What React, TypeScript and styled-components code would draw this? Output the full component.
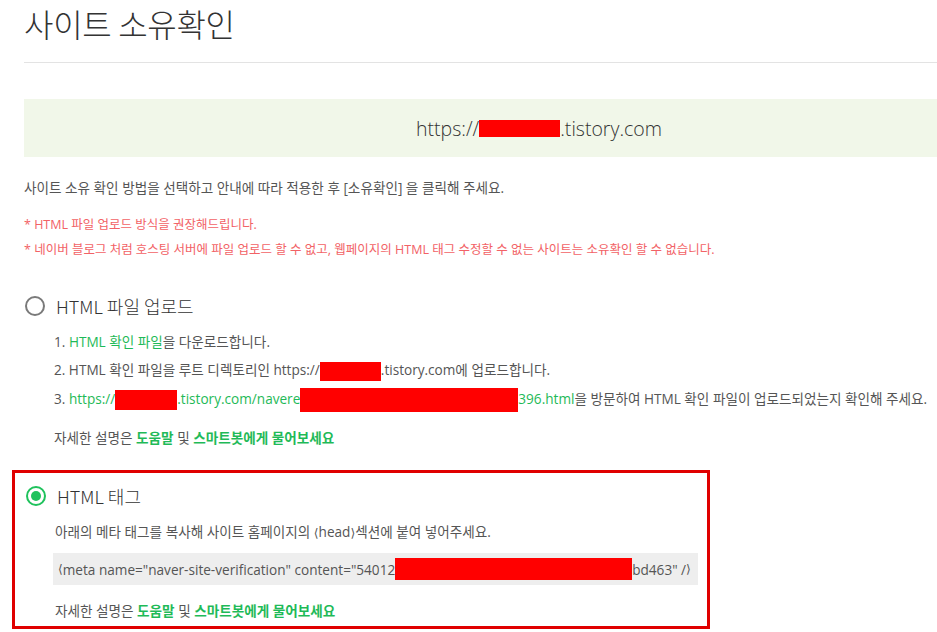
import React from 'react';
import styled, { createGlobalStyle } from 'styled-components';

const GlobalStyle = createGlobalStyle`
  html, body {
    margin: 0;
    padding: 0;
    background: #fff;
    overflow: hidden;
  }
  body {
    font-family: 'Open Sans', 'Noto Sans CJK KR', sans-serif;
    color: #555;
  }
`;

const Page = styled.div`
  width: 1030px;
  padding: 0 0 0 24px;
`;

const Title = styled.h1`
  margin: 0;
  height: 63px;
  font-family: 'Noto Sans CJK KR', sans-serif;
  font-size: 32px;
  font-weight: 300;
  line-height: 46px;
  color: #333;
  letter-spacing: -0.3px;
  border-bottom: 1px solid #e3e3e3;
  box-sizing: border-box;
`;

const UrlBox = styled.div`
  margin-top: 36px;
  height: 58px;
  background: #f1f7e9;
  display: flex;
  align-items: center;
  justify-content: center;
  font-size: 19.5px;
  font-weight: 300;
  color: #333;
`;

const Redact = styled.span<{ w: number; h: number }>`
  display: inline-block;
  width: ${(p) => p.w}px;
  height: ${(p) => p.h}px;
  background: #ff0000;
  vertical-align: middle;
`;

const Angle = styled.span`
  font-family: 'DejaVu Sans', sans-serif;
  font-size: 0.9em;
`;

const Intro = styled.p`
  margin: 21px 0 0;
  font-size: 13.6px;
  line-height: 20px;
  color: #555;
`;

const Notes = styled.div`
  margin-top: 18px;
  display: flex;
  flex-direction: column;
  gap: 7px;
`;

const Note = styled.p`
  margin: 0;
  font-size: 12.5px;
  line-height: 18px;
  color: #f26266;
`;

const Section = styled.div<{ $marked?: boolean }>`
  margin-top: ${(p) => (p.$marked ? '22px' : '34px')};
  margin-left: ${(p) => (p.$marked ? '-12px' : '0')};
  width: ${(p) => (p.$marked ? '698px' : 'auto')};
  padding: ${(p) => (p.$marked ? '10px 9px 5px 10px' : '0')};
  border: ${(p) => (p.$marked ? '3px solid #e00000' : 'none')};
  box-sizing: border-box;
`;

const RadioRow = styled.div`
  display: flex;
  align-items: center;
  gap: 11px;
  height: 26px;
`;

const Radio = styled.span<{ $checked?: boolean }>`
  width: 20px;
  height: 20px;
  margin-left: 1px;
  box-sizing: border-box;
  border-radius: 50%;
  border: 2px solid ${(p) => (p.$checked ? '#1fc25c' : '#7a7a7a')};
  display: flex;
  align-items: center;
  justify-content: center;

  &::after {
    content: '';
    width: 10px;
    height: 10px;
    border-radius: 50%;
    background: #1fc25c;
    display: ${(p) => (p.$checked ? 'block' : 'none')};
  }
`;

const RadioLabel = styled.span`
  font-family: 'Noto Sans CJK KR', sans-serif;
  font-size: 18px;
  color: #333;
  font-weight: 300;
`;

const Body = styled.div`
  padding-left: 30px;
  font-size: 13.6px;
  color: #555;
`;

const Steps = styled.ol`
  list-style: none;
  margin: 13px 0 0;
  padding: 0;
  display: flex;
  flex-direction: column;
  gap: 8px;
`;

const Step = styled.li`
  line-height: 20px;
  height: 20px;
  white-space: nowrap;
`;

const Green = styled.span<{ $bold?: boolean }>`
  color: #1fba58;
  font-weight: ${(p) => (p.$bold ? 600 : 400)};
`;

const Help = styled.p<{ $top: number }>`
  margin: ${(p) => p.$top}px 0 0;
  line-height: 20px;
`;

const Desc = styled.p`
  margin: 13px 0 0;
  line-height: 20px;
`;

const CodeBox = styled.div`
  margin: 10px 0 0 -2px;
  height: 32px;
  background: #eeeeee;
  display: flex;
  align-items: center;
  padding-left: 5px;
  white-space: pre;
  overflow: hidden;
  font-size: 13.6px;
  color: #555;
`;

const App: React.FC = () => {
  return (
    <Page>
      <GlobalStyle />
      <Title>사이트 소유확인</Title>
      <UrlBox>
        https://<Redact w={81} h={17} />.tistory.com
      </UrlBox>
      <Intro>사이트 소유 확인 방법을 선택하고 안내에 따라 적용한 후 [소유확인] 을 클릭해 주세요.</Intro>
      <Notes>
        <Note>* HTML 파일 업로드 방식을 권장해드립니다.</Note>
        <Note>
          * 네이버 블로그 처럼 호스팅 서버에 파일 업로드 할 수 없고, 웹페이지의 HTML 태그 수정할 수 없는 사이트는 소유확인 할 수 없습니다.
        </Note>
      </Notes>

      <Section>
        <RadioRow>
          <Radio />
          <RadioLabel>HTML 파일 업로드</RadioLabel>
        </RadioRow>
        <Body>
          <Steps>
            <Step>
              1. <Green>HTML 확인 파일</Green>을 다운로드합니다.
            </Step>
            <Step>
              2. HTML 확인 파일을 루트 디렉토리인 https://<Redact w={61} h={19} />.tistory.com에 업로드합니다.
            </Step>
            <Step>
              3. <Green>https://</Green>
              <Redact w={62} h={20} />
              <Green>.tistory.com/navere</Green>
              <Redact w={218} h={24} />
              <Green>396.html</Green>을 방문하여 HTML 확인 파일이 업로드되었는지 확인해 주세요.
            </Step>
          </Steps>
          <Help $top={20}>
            자세한 설명은 <Green $bold>도움말</Green> 및 <Green $bold>스마트봇에게 물어보세요</Green>
          </Help>
        </Body>
      </Section>

      <Section $marked>
        <RadioRow>
          <Radio $checked />
          <RadioLabel>HTML 태그</RadioLabel>
        </RadioRow>
        <Body>
          <Desc>
            아래의 메타 태그를 복사해 사이트 홈페이지의 <Angle>⟨</Angle>head<Angle>⟩</Angle>섹션에 붙여 넣어주세요.
          </Desc>
          <CodeBox>
            <Angle>⟨</Angle>meta name="naver-site-verification" content="54012
            <Redact w={237} h={22} />
            bd463" /<Angle>⟩</Angle>
          </CodeBox>
          <Help $top={16}>
            자세한 설명은 <Green $bold>도움말</Green> 및 <Green $bold>스마트봇에게 물어보세요</Green>
          </Help>
        </Body>
      </Section>
    </Page>
  );
};

export default App;
